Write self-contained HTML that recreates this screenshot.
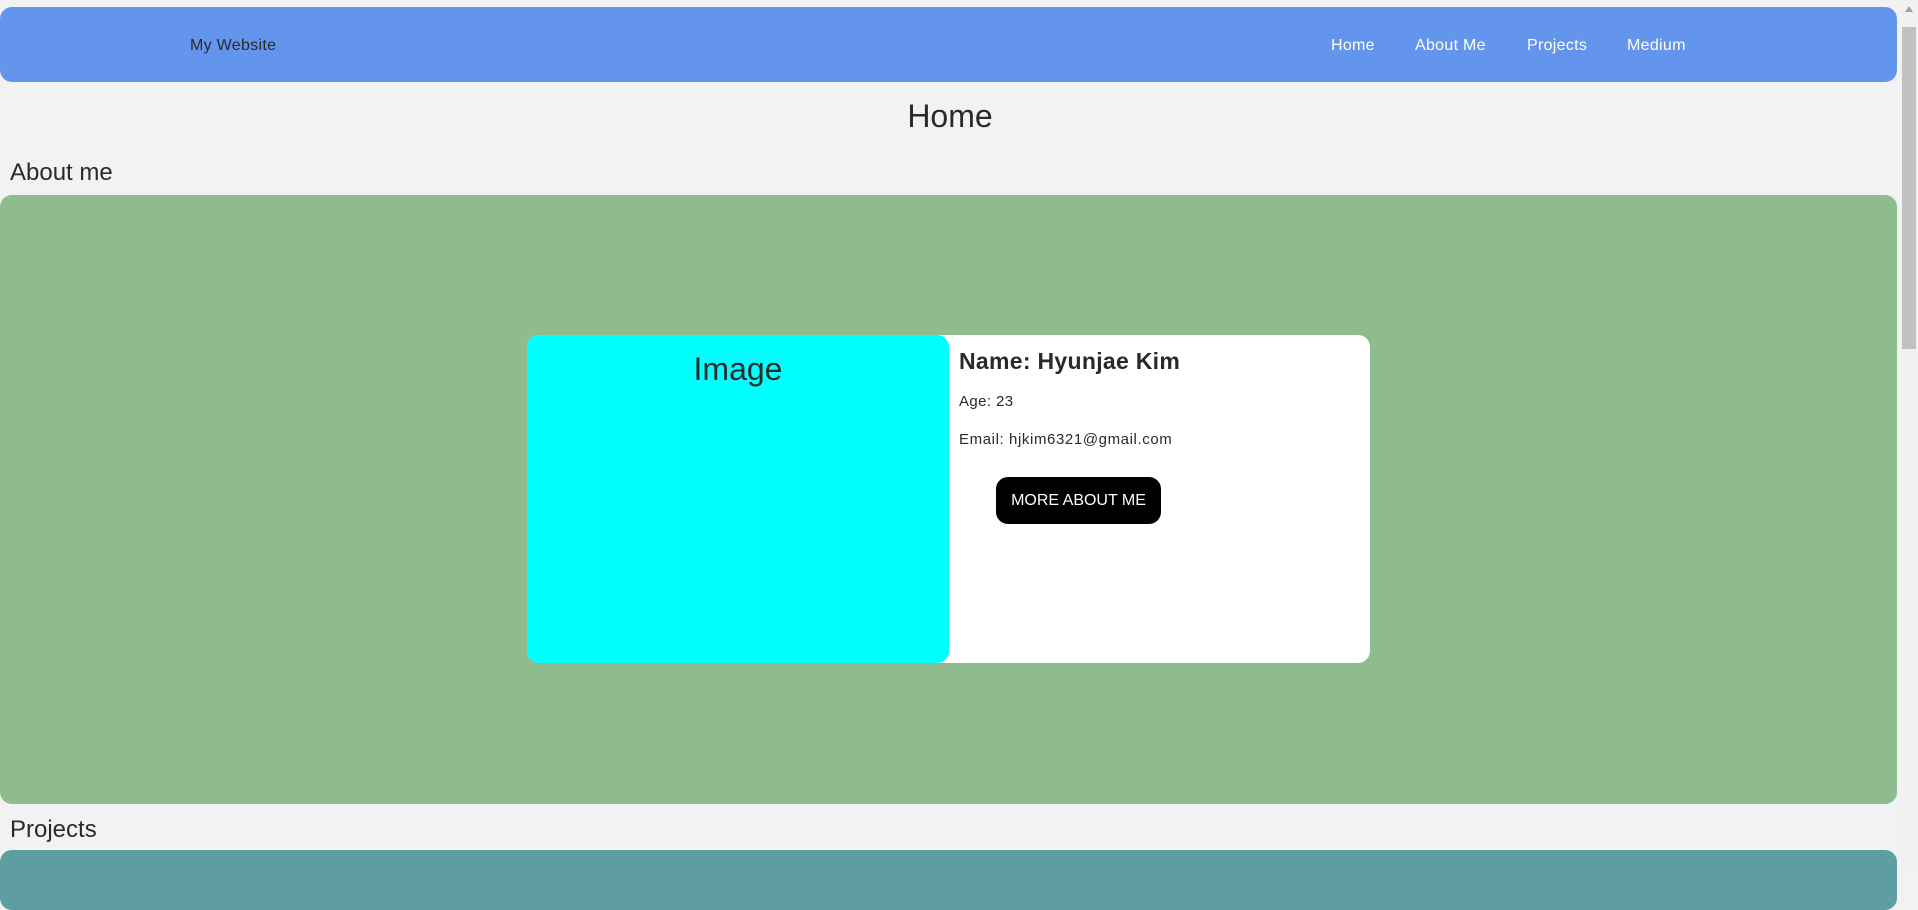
<!DOCTYPE html>
<html><head><meta charset="utf-8"><style>
*{margin:0;padding:0;box-sizing:border-box}
body{width:1918px;height:870px;overflow:hidden;background:#f2f2f2;font-family:"Liberation Sans",sans-serif;color:#2a2a2a;position:relative}
.a{position:absolute;white-space:nowrap}
</style></head><body>
<div class="a" style="left:0;top:7px;width:1897px;height:75px;background:#6495ed;border-radius:12px"></div>
<div class="a" style="left:190px;top:37px;font-size:16px;letter-spacing:0.3px;color:#2a2a2a">My Website</div>
<div class="a" style="left:1331px;top:37px;font-size:16px;letter-spacing:0.3px;color:#fff">Home</div>
<div class="a" style="left:1415px;top:37px;font-size:16px;letter-spacing:0.3px;color:#fff">About Me</div>
<div class="a" style="left:1527px;top:37px;font-size:16px;letter-spacing:0.3px;color:#fff">Projects</div>
<div class="a" style="left:1627px;top:37px;font-size:16px;letter-spacing:0.3px;color:#fff">Medium</div>
<div class="a" style="left:0;width:1900px;text-align:center;top:98px;font-size:32px;font-weight:500">Home</div>
<div class="a" style="left:10px;top:159px;font-size:24px;font-weight:500">About me</div>
<div class="a" style="left:0;top:195px;width:1897px;height:609px;background:#8fbc8f;border-radius:12px"></div>
<div class="a" style="left:527px;top:335px;width:843px;height:328px;background:#fff;border-radius:12px"></div>
<div class="a" style="left:527px;top:335px;width:422px;height:328px;background:#00ffff;border-radius:12px"></div>
<div class="a" style="left:527px;width:422px;text-align:center;top:351px;font-size:32px">Image</div>
<div class="a" style="left:959px;top:348px;font-size:23px;font-weight:bold;letter-spacing:0.3px">Name: Hyunjae Kim</div>
<div class="a" style="left:959px;top:393px;font-size:15px;letter-spacing:0.4px">Age: 23</div>
<div class="a" style="left:959px;top:431px;font-size:15px;letter-spacing:0.6px">Email: hjkim6321@gmail.com</div>
<div class="a" style="left:996px;top:477px;width:165px;height:47px;background:#000;border-radius:12px;color:#fff;font-size:16px;text-align:center;line-height:47px">MORE ABOUT ME</div>
<div class="a" style="left:10px;top:816px;font-size:24px;font-weight:500">Projects</div>
<div class="a" style="left:0;top:850px;width:1897px;height:60px;background:#5f9ea0;border-radius:12px"></div>
<div class="a" style="left:1900px;top:0;width:18px;height:870px;background:#f1f1f1"></div>
<div class="a" style="left:1902px;top:27px;width:14px;height:322px;background:#c1c1c1"></div>
<div class="a" style="left:1905px;top:6px;width:0;height:0;border-left:4px solid transparent;border-right:4px solid transparent;border-bottom:6px solid #a3a3a3"></div>
</body></html>
